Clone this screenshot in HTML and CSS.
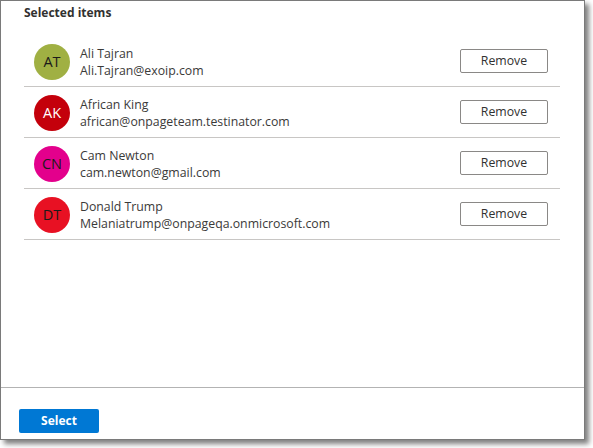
FILE: index.html
```html
<!DOCTYPE html>
<html>
<head>
<meta charset="utf-8">
<link rel="stylesheet" href="styles.css">
</head>
<body>
<div class="window">
  <div class="header">Selected items</div>
  <div class="content">
    <ul class="list">
      <li class="row">
        <span class="avatar av-green">AT</span>
        <div class="info">
          <div class="name">Ali Tajran</div>
          <div class="email">Ali.Tajran@exoip.com</div>
        </div>
        <button class="btn-remove">Remove</button>
      </li>
      <li class="row">
        <span class="avatar av-darkred">AK</span>
        <div class="info">
          <div class="name">African King</div>
          <div class="email">african@onpageteam.testinator.com</div>
        </div>
        <button class="btn-remove">Remove</button>
      </li>
      <li class="row">
        <span class="avatar av-magenta">CN</span>
        <div class="info">
          <div class="name">Cam Newton</div>
          <div class="email">cam.newton@gmail.com</div>
        </div>
        <button class="btn-remove">Remove</button>
      </li>
      <li class="row">
        <span class="avatar av-red">DT</span>
        <div class="info">
          <div class="name">Donald Trump</div>
          <div class="email">Melaniatrump@onpageqa.onmicrosoft.com</div>
        </div>
        <button class="btn-remove">Remove</button>
      </li>
    </ul>
  </div>
  <div class="footer">
    <button class="btn-primary">Select</button>
  </div>
</div>
</body>
</html>
```

FILE: styles.css
```css
* { box-sizing: border-box; }
html, body { margin: 0; padding: 0; background: #ffffff; }
body {
  font-family: "Open Sans", "Noto Sans", sans-serif;
  color: #323130;
  width: 593px;
  height: 448px;
  overflow: hidden;
}
.window {
  width: 585px;
  height: 440px;
  border: 1px solid #7a7a7a;
  background: #ffffff;
  box-shadow: 4px 4px 5px rgba(0, 0, 0, 0.5);
  display: flex;
  flex-direction: column;
}
.header {
  height: 35px;
  padding: 3px 0 0 23px;
  font-size: 12px;
  font-weight: 700;
  line-height: 18px;
  color: #323130;
}
.content {
  flex: 1;
  padding: 0 24px 0 23px;
}
.list {
  list-style: none;
  margin: 0;
  padding: 0;
}
.row {
  height: 51px;
  border-bottom: 1px solid #c8c6c4;
  display: flex;
  align-items: center;
  padding: 0 12px 0 10px;
}
.avatar {
  width: 36px;
  height: 36px;
  border-radius: 50%;
  display: flex;
  align-items: center;
  justify-content: center;
  font-size: 14.5px;
  flex-shrink: 0;
  margin-top: 1px;
}
.av-green { background: #a0b043; color: #1b1a19; }
.av-darkred { background: #c4000b; color: #ffffff; }
.av-magenta { background: #e3008c; color: #1b1a19; }
.av-red { background: #e81123; color: #1b1a19; }
.info {
  flex: 1;
  margin-left: 10px;
  font-size: 12.3px;
  line-height: 17px;
  margin-top: 2px;
  color: #3b3a39;
}
.btn-remove {
  width: 88px;
  height: 24px;
  margin-top: -1px;
  border: 1px solid #8a8886;
  border-radius: 2px;
  background: #ffffff;
  font-family: inherit;
  font-size: 12.3px;
  color: #323130;
  padding: 0;
}
.footer {
  height: 52px;
  border-top: 1px solid #b3b3b3;
  padding: 20px 0 0 18px;
}
.btn-primary {
  width: 80px;
  height: 24px;
  border: none;
  border-radius: 2px;
  background: #0078d4;
  color: #ffffff;
  font-family: inherit;
  font-size: 12px;
  font-weight: 700;
  padding: 0;
}
```
